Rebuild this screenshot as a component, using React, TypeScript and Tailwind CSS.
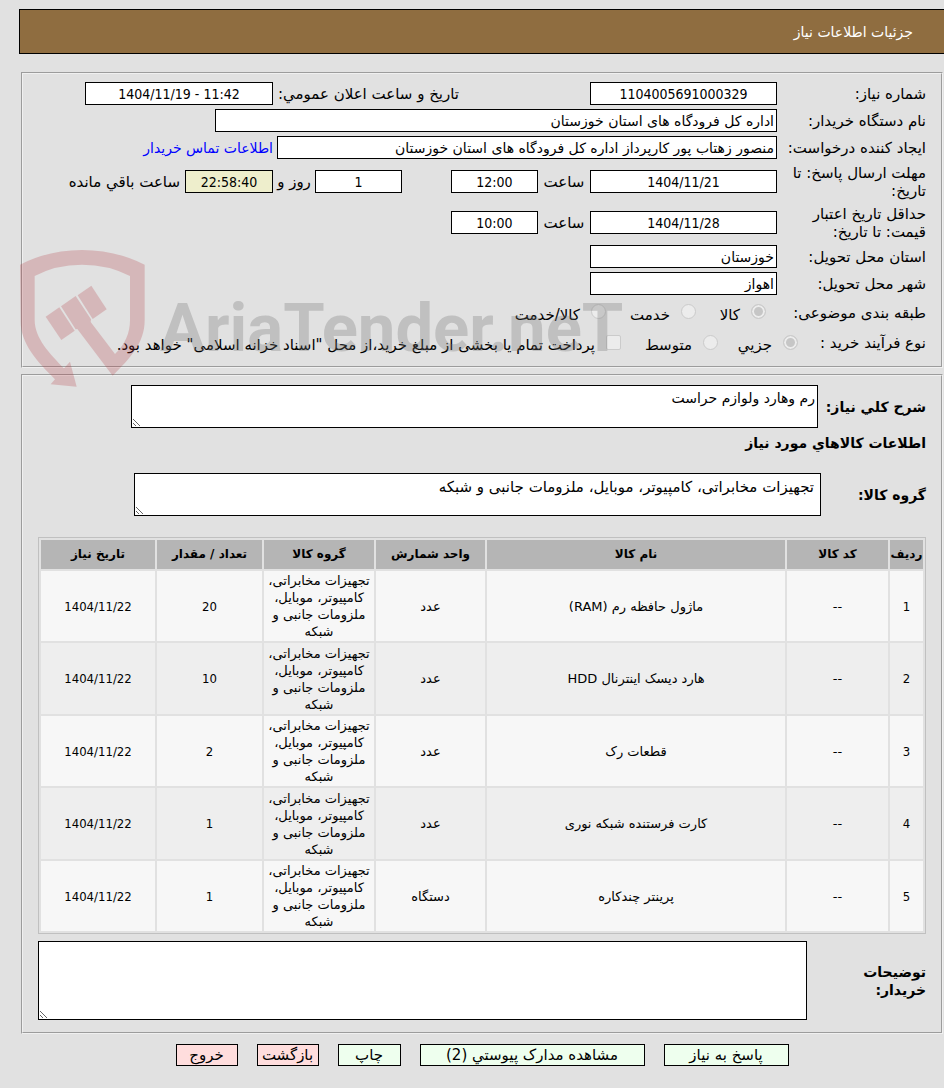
import { useId } from 'react'
import type { ReactNode } from 'react'
import clsx from 'clsx'

const GROUP = 'تجهیزات مخابراتی، کامپیوتر، موبایل، ملزومات جانبی و شبکه'

const items = [
  { name: 'ماژول حافظه رم (RAM)', unit: 'عدد', qty: 20 },
  { name: 'هارد دیسک اینترنال HDD', unit: 'عدد', qty: 10 },
  { name: 'قطعات رک', unit: 'عدد', qty: 2 },
  { name: 'کارت فرستنده شبکه نوری', unit: 'عدد', qty: 1 },
  { name: 'پرینتر چندکاره', unit: 'دستگاه', qty: 1 },
]

const columns = [
  { title: 'ردیف', width: 'w-[33px]' },
  { title: 'کد کالا', width: 'w-[101px]' },
  { title: 'نام کالا', width: '' },
  { title: 'واحد شمارش', width: 'w-[109px]' },
  { title: 'گروه کالا', width: 'w-[110px]' },
  { title: 'تعداد / مقدار', width: 'w-[105px]' },
  { title: 'تاریخ نیاز', width: 'w-[114px]' },
]

const actions = [
  { label: 'پاسخ به نیاز', className: 'w-[125px] bg-[#eeffee]' },
  { label: 'مشاهده مدارک پیوستي (2)', className: 'w-[225px] bg-[#eeffee]' },
  { label: 'چاپ', className: 'w-[63px] bg-[#eeffee]' },
  { label: 'بازگشت', className: 'w-[62px] bg-[#ffdddd]' },
  { label: 'خروج', className: 'w-[62px] bg-[#ffdddd]' },
]

// digits are set in the condensed cut, Persian text in the regular one
const numeric = "text-center font-['DejaVu_Sans_Condensed','DejaVu_Sans',sans-serif]"

function Field({ id, value, label, className }: { id?: string; value: string; label?: string; className: string }) {
  return (
    <input
      id={id}
      type="text"
      readOnly
      defaultValue={value}
      aria-label={label}
      className={clsx('h-[23px] shrink-0 border border-black px-[2px] text-[14px]', className)}
    />
  )
}

function Row({ label, htmlFor, tall, children }: { label: string; htmlFor: string; tall?: boolean; children: ReactNode }) {
  return (
    <div className={clsx('flex items-center', tall ? 'h-[41px]' : 'h-[27px]')}>
      <label htmlFor={htmlFor} className="w-[149px] shrink-0 pl-[9px] leading-[18px]">
        {label}
      </label>
      {children}
    </div>
  )
}

function Option({ type = 'radio', name, label, checked, className }: {
  type?: 'radio' | 'checkbox'
  name: string
  label: string
  checked?: boolean
  className?: string
}) {
  const id = useId()
  return (
    <div className={clsx('flex shrink-0 items-center gap-[11px]', className)}>
      <input
        id={id}
        type={type}
        name={name}
        disabled
        defaultChecked={checked}
        className={clsx(
          'mb-[2px] size-[15px] shrink-0 appearance-none border border-[#cbcbcb] bg-[#ececec] checked:bg-[#c6c6c6] checked:shadow-[inset_0_0_0_2px_#ececec]',
          type === 'radio' ? 'rounded-full' : 'rounded-[2px]',
        )}
      />
      <label htmlFor={id} className="whitespace-nowrap pt-1">
        {label}
      </label>
    </div>
  )
}

function Watermark() {
  return (
    <div
      aria-hidden="true"
      dir="ltr"
      className="pointer-events-none absolute top-[176px] left-[-3px] flex items-start gap-[15px]"
    >
      <svg viewBox="60 60 375 411" className="h-[137px] w-[125px] fill-[#b53d45] opacity-25">
        <path d="M60 104Q145 60 246 60T434 104V270C434 340 390 385 338 437L232 297L227 298L183 229L227 198L273 268L272 276L345 372C375 343 390 310 390 270V138Q325 104 246 104T104 138V270C104 325 150 372 192 415L210 395L230 470L152 463L165 448C110 393 60 340 62 270Z" />
        <path d="M137 260L178 232L224 302L184 330Z" />
        <path d="M233 196L274 167L320 238L278 267Z" />
      </svg>
      <span className="pt-[34px] font-[Roboto,sans-serif] text-[67px] leading-[88px] font-bold whitespace-nowrap text-[#737373]/30">
        AriaTender.neT
      </span>
    </div>
  )
}

function RequestInfo() {
  return (
    <section className="relative border-2 border-[#f0f0f0] [border-style:groove] pt-[6px] pr-[15px] pb-2">
      <Row label="شماره نیاز:" htmlFor="need-no">
        <div className="w-[318px] shrink-0">
          <Field id="need-no" value="1104005691000329" className={clsx('w-[187px] bg-white', numeric)} />
        </div>
        <label htmlFor="announced" className="w-[186px] shrink-0 whitespace-nowrap">
          تاریخ و ساعت اعلان عمومي:
        </label>
        <Field
          id="announced"
          value="1404/11/19 - 11:42"
          className={clsx('w-[188px] bg-white [direction:ltr]', numeric)}
        />
      </Row>
      <Row label="نام دستگاه خریدار:" htmlFor="buyer">
        <Field id="buyer" value="اداره کل فرودگاه های استان خوزستان" className="w-[562px] bg-white" />
      </Row>
      <Row label="ایجاد کننده درخواست:" htmlFor="creator">
        <Field id="creator" value="منصور زهتاب پور کارپرداز اداره کل فرودگاه های استان خوزستان" className="w-[500px] bg-white" />
        <a href="#contact" className="mr-1 text-[14px] whitespace-nowrap text-[#0000ff]">
          اطلاعات تماس خریدار
        </a>
      </Row>
      <Row label="مهلت ارسال پاسخ: تا تاریخ:" htmlFor="deadline" tall>
        <Field id="deadline" value="1404/11/21" className={clsx('w-[187px] bg-white', numeric)} />
        <label htmlFor="deadline-hour" className="w-[52px] shrink-0 text-center">ساعت</label>
        <Field id="deadline-hour" value="12:00" className={clsx('w-[87px] bg-white', numeric)} />
        <div className="w-[49px] shrink-0" />
        <Field value="1" label="روز" className={clsx('w-[87px] bg-white', numeric)} />
        <span className="w-[42px] shrink-0 text-center">روز و</span>
        <Field value="22:58:40" label="ساعت باقي مانده" className={clsx('w-[88px] bg-[#eeeecc]', numeric)} />
        <span className="mr-[5px] whitespace-nowrap">ساعت باقي مانده</span>
      </Row>
      <Row label="حداقل تاریخ اعتبار قیمت: تا تاریخ:" htmlFor="validity" tall>
        <Field id="validity" value="1404/11/28" className={clsx('w-[187px] bg-white', numeric)} />
        <label htmlFor="validity-hour" className="w-[52px] shrink-0 text-center">ساعت</label>
        <Field id="validity-hour" value="10:00" className={clsx('w-[87px] bg-white', numeric)} />
      </Row>
      <Row label="استان محل تحویل:" htmlFor="province">
        <Field id="province" value="خوزستان" className="w-[187px] bg-white" />
      </Row>
      <Row label="شهر محل تحویل:" htmlFor="city">
        <Field id="city" value="اهواز" className="w-[187px] bg-white" />
      </Row>

      <div role="radiogroup" aria-label="طبقه بندی موضوعی" className="flex h-[31px] items-center">
        <span className="w-[160px] shrink-0">طبقه بندی موضوعی:</span>
        <Option name="category" label="کالا" checked className="w-[70px]" />
        <Option name="category" label="خدمت" className="w-[90px]" />
        <Option name="category" label="کالا/خدمت" />
      </div>
      <div role="radiogroup" aria-label="نوع فرآیند خرید" className="flex h-[30px] items-center">
        <span className="w-[128px] shrink-0">نوع فرآیند خرید :</span>
        <Option name="process" label="جزیي" checked className="w-[80px]" />
        <Option name="process" label="متوسط" className="w-[97px]" />
        <Option
          type="checkbox"
          name="treasury"
          label={'پرداخت تمام یا بخشی از مبلغ خرید،از محل "اسناد خزانه اسلامی" خواهد بود.'}
        />
      </div>
      <Watermark />
    </section>
  )
}

function ItemsTable() {
  return (
    <table className="w-full table-fixed border-separate border-spacing-[2px] border border-[#c0c0c0] text-center text-[13px] leading-[17px]">
      <thead>
        <tr className="h-[29px] bg-[#b5b5b5] text-[12px]">
          {columns.map((col) => (
            <th key={col.title} className={clsx('p-0 font-bold whitespace-nowrap', col.width)}>
              {col.title}
            </th>
          ))}
        </tr>
      </thead>
      <tbody>
        {items.map((item, i) => (
          <tr key={item.name} className="h-[70px] bg-[#f7f7f7] even:h-[71px] even:bg-[#eeeeee]">
            <td className={clsx('p-px', numeric)}>{i + 1}</td>
            <td className="p-px">--</td>
            <td className="p-px">{item.name}</td>
            <td className="p-px">{item.unit}</td>
            <td className="p-px">{GROUP}</td>
            <td className={clsx('p-px', numeric)}>{item.qty}</td>
            <td className={clsx('p-px', numeric)}>1404/11/22</td>
          </tr>
        ))}
      </tbody>
    </table>
  )
}

function GoodsInfo() {
  return (
    <section className="mt-[6px] border-2 border-[#f0f0f0] [border-style:groove] pt-[9px] pr-[15px] pb-3 pl-[15px] text-[14px]">
      <div className="flex items-center">
        <label htmlFor="summary" className="w-[108px] shrink-0 font-bold whitespace-nowrap">
          شرح کلي نیاز:
        </label>
        <textarea
          id="summary"
          readOnly
          defaultValue="رم وهارد ولوازم حراست"
          className="ml-[93px] block h-[43px] min-w-0 flex-1 border border-black bg-white px-[2px] py-[3px] leading-[18px]"
        />
      </div>
      <h2 className="mt-[6px] leading-[18px] font-bold">اطلاعات کالاهاي مورد نیاز</h2>
      <div className="mt-[21px] flex items-center">
        <label htmlFor="group" className="w-[105px] shrink-0 font-bold">
          گروه کالا:
        </label>
        <textarea
          id="group"
          readOnly
          defaultValue={GROUP}
          className="ml-[96px] block h-[43px] min-w-0 flex-1 border border-black bg-white px-[6px] py-1 text-[15px] leading-[18px]"
        />
      </div>
      <div className="mt-[21px]">
        <ItemsTable />
      </div>
      <div className="mt-[7px] flex items-center">
        <label htmlFor="notes" className="w-[119px] shrink-0 pl-8 leading-[18px] font-bold">
          توضیحات خریدار:
        </label>
        <textarea id="notes" className="block h-[79px] min-w-0 flex-1 border border-black bg-white p-[2px]" />
      </div>
    </section>
  )
}

export default function App() {
  return (
    <div
      dir="rtl"
      className="min-h-screen bg-[#e1e1e1] pt-[9px] pb-[22px] font-['DejaVu_Sans',sans-serif] text-[15px] leading-[18px] text-black"
    >
      <header className="ml-[19px] flex h-[45px] items-center border border-r-0 border-black bg-[#8f6d40] pr-[31px] text-white">
        <h1 className="text-[14px]">جزئیات اطلاعات نیاز</h1>
      </header>
      <main className="mt-[18px] mr-px ml-[21px]">
        <RequestInfo />
        <GoodsInfo />
        <div className="mt-[10px] flex justify-center gap-[19px]">
          {actions.map((action) => (
            <button
              key={action.label}
              type="button"
              className={clsx('h-[22px] border border-black leading-[20px] whitespace-nowrap', action.className)}
            >
              {action.label}
            </button>
          ))}
        </div>
      </main>
    </div>
  )
}
